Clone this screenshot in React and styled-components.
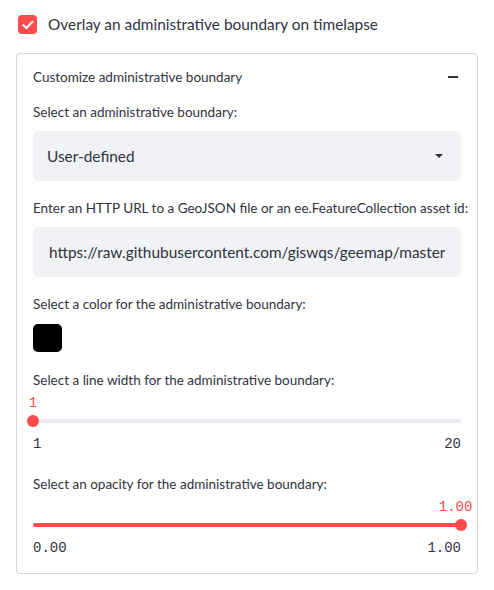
import React from "react";
import styled, { createGlobalStyle } from "styled-components";

const GlobalStyle = createGlobalStyle`
  body {
    margin: 0;
    background: #fff;
    color: #31333f;
    font-family: Lato, "Noto Sans", sans-serif;
  }
`;

const Page = styled.div`
  width: 462px;
  padding: 14px 16px 0 16px;
`;

const CheckRow = styled.label`
  display: flex;
  align-items: center;
  gap: 11px;
  height: 21px;
  padding-left: 2px;
  font-size: 15.4px;
  line-height: 21px;
`;

const CheckBox = styled.span`
  width: 19px;
  height: 19px;
  border-radius: 4px;
  background: #ff4b4b;
  display: flex;
  align-items: center;
  justify-content: center;
`;

const Card = styled.div`
  margin-top: 18px;
  border: 1px solid rgba(49, 51, 63, 0.2);
  border-radius: 4px;
`;

const CardHeader = styled.div`
  height: 46px;
  display: flex;
  align-items: center;
  justify-content: space-between;
  padding: 0 19px 0 16px;
  font-size: 13.5px;
`;

const Minus = styled.span`
  width: 10px;
  height: 2px;
  background: #31333f;
`;

const CardBody = styled.div`
  padding: 0 16px 14px 16px;
`;

const Label = styled.div`
  font-size: 13.5px;
  line-height: 21px;
  white-space: nowrap;
  margin-top: ${(p) => p.$gap || 0}px;
`;

const Field = styled.div`
  margin-top: 8px;
  height: 50px;
  border-radius: 5px;
  background: #f0f2f6;
  display: flex;
  align-items: center;
  justify-content: space-between;
  padding: 0 ${(p) => p.$right || 14}px 0 ${(p) => p.$left || 14}px;
  font-size: 15.4px;
  white-space: nowrap;
  overflow: hidden;
`;

const FieldText = styled.span`
  overflow: hidden;
  white-space: nowrap;
  flex: 1;
`;

const Caret = styled.span`
  width: 0;
  height: 0;
  border-left: 4px solid transparent;
  border-right: 4px solid transparent;
  border-top: 4px solid #31333f;
`;

const Swatch = styled.div`
  margin-top: 9px;
  width: 29px;
  height: 28px;
  border-radius: 5px;
  background: #000;
`;

const Slider = styled.div`
  position: relative;
`;

const ValueRow = styled.div`
  position: relative;
  height: 25px;
`;

const Value = styled.span`
  position: absolute;
  top: 0;
  line-height: 24px;
  font-family: "Liberation Mono", "DejaVu Sans Mono", monospace;
  font-size: 14px;
  color: #ff4b4b;
  transform: translateX(${(p) => (p.$end ? "-66%" : "-50%")});
`;

const Track = styled.div`
  position: relative;
  margin-top: 3px;
  height: 4px;
  border-radius: 2px;
  background: #e6e9ef;
`;

const Fill = styled.div`
  height: 100%;
  border-radius: 2px;
  background: #ff4b4b;
`;

const Thumb = styled.span`
  position: absolute;
  top: 50%;
  width: 12px;
  height: 12px;
  border-radius: 50%;
  background: #ff4b4b;
  transform: translate(-50%, -50%);
`;

const Ticks = styled.div`
  margin-top: 11px;
  display: flex;
  justify-content: space-between;
  font-family: "Liberation Mono", "DejaVu Sans Mono", monospace;
  font-size: 14px;
  line-height: 21px;
`;

const RangeSlider = ({ min, max, value, fmt }) => {
  const pct = ((value - min) / (max - min)) * 100;
  return (
    <Slider>
      <ValueRow>
        <Value style={{ left: `${pct}%` }} $end={pct > 90}>
          {fmt(value)}
        </Value>
      </ValueRow>
      <Track>
        <Fill style={{ width: `${pct}%` }} />
        <Thumb style={{ left: `${pct}%` }} />
      </Track>
      <Ticks>
        <span>{fmt(min)}</span>
        <span>{fmt(max)}</span>
      </Ticks>
    </Slider>
  );
};

export default function App() {
  return (
    <>
      <GlobalStyle />
      <Page>
        <CheckRow>
          <CheckBox>
            <svg width="12" height="10" viewBox="0 0 12 10">
              <path
                d="M1.5 5.2 L4.5 8 L10.5 1.8"
                fill="none"
                stroke="#fff"
                strokeWidth="2.2"
                strokeLinecap="round"
                strokeLinejoin="round"
              />
            </svg>
          </CheckBox>
          Overlay an administrative boundary on timelapse
        </CheckRow>
        <Card>
          <CardHeader>
            <span>Customize administrative boundary</span>
            <Minus />
          </CardHeader>
          <CardBody>
            <Label $gap={2}>Select an administrative boundary:</Label>
            <Field $right={18}>
              <FieldText>User-defined</FieldText>
              <Caret />
            </Field>
            <Label $gap={17}>
              Enter an HTTP URL to a GeoJSON file or an ee.FeatureCollection asset id:
            </Label>
            <Field $left={16} $right={16}>
              <FieldText>
                https://raw.githubusercontent.com/giswqs/geemap/master/examples/data/countries.geojson
              </FieldText>
            </Field>
            <Label $gap={17}>Select a color for the administrative boundary:</Label>
            <Swatch />
            <Label $gap={18}>Select a line width for the administrative boundary:</Label>
            <RangeSlider min={1} max={20} value={1} fmt={(v) => String(v)} />
            <Label $gap={19}>Select an opacity for the administrative boundary:</Label>
            <RangeSlider min={0} max={1} value={1} fmt={(v) => v.toFixed(2)} />
          </CardBody>
        </Card>
      </Page>
    </>
  );
}
